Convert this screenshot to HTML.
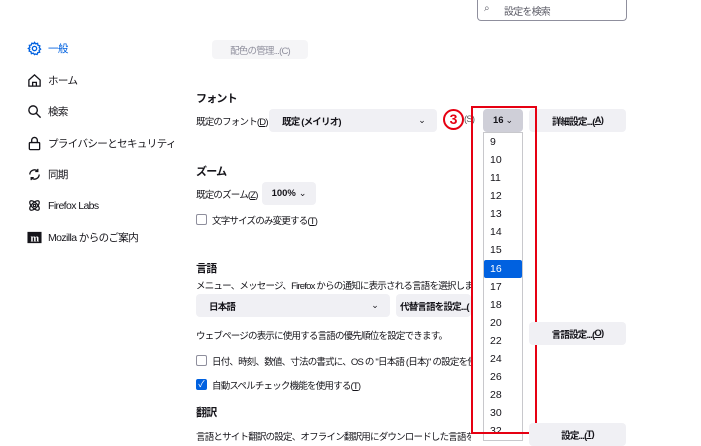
<!DOCTYPE html>
<html><head><meta charset="utf-8"><style>
*{margin:0;padding:0;box-sizing:border-box}
body{width:701px;height:441px;overflow:hidden;background:#fff;font-family:"Liberation Sans","Noto Sans CJK JP",sans-serif;font-size:9.5px;letter-spacing:-0.8px;color:#15141a;position:relative}
.a{position:absolute;white-space:nowrap}
.btn{position:absolute;background:#f0f0f4;border-radius:4px;display:flex;align-items:center;justify-content:center;font-size:9.5px;white-space:nowrap;overflow:hidden}
.h{font-weight:bold;font-size:11px}
.nav{position:absolute;left:27px;display:flex;align-items:center;font-size:10.5px;letter-spacing:-0.6px}
.nav svg{width:15px;height:15px;margin-right:6px}
.cb{position:absolute;width:11px;height:11px;border:1px solid #8f8f9d;border-radius:2px}
.it{position:absolute;left:490px;font-size:10.5px;letter-spacing:0}
</style></head><body>
<div class="a" style="left:477px;top:0;width:150px;height:21px;border:1px solid #8f8f9d;border-top:none;border-radius:0 0 4px 4px;color:#5b5b66;padding:3px 0 0 26px;font-size:10px">設定を検索</div>
<div class="a" style="left:484px;top:3px;font-size:10px;color:#5b5b66">⌕</div>

<div class="nav" style="top:41px;color:#0061e0"><svg viewBox="0 0 16 16" fill="none" stroke="#0061e0" stroke-width="1.4"><circle cx="8" cy="8" r="2.3"/><path d="M8 1.5l1.3 1.6 2-.6.4 2 2 .7-.6 2 1.4 1.5-1.6 1.3.6 2-2 .4-.7 2-2-.6L8 14.5l-1.3-1.6-2 .6-.4-2-2-.7.6-2L1.5 8l1.6-1.3-.6-2 2-.4.7-2 2 .6z"/></svg>一般</div>
<div class="nav" style="top:73px"><svg viewBox="0 0 16 16" fill="none" stroke="#15141a" stroke-width="1.4"><path d="M2 7.5L8 2l6 5.5V14H2z"/><path d="M6 14V10h4v4"/></svg>ホーム</div>
<div class="nav" style="top:104px"><svg viewBox="0 0 16 16" fill="none" stroke="#15141a" stroke-width="1.5"><circle cx="6.5" cy="6.5" r="4.5"/><path d="M10 10l4.5 4.5"/></svg>検索</div>
<div class="nav" style="top:136px"><svg viewBox="0 0 16 16" fill="none" stroke="#15141a" stroke-width="1.4"><rect x="2.5" y="7" width="11" height="7.5" rx="1"/><path d="M5 7V4.5a3 3 0 016 0V7"/></svg>プライバシーとセキュリティ</div>
<div class="nav" style="top:167px"><svg viewBox="0 0 16 16" fill="none" stroke="#15141a" stroke-width="1.4"><path d="M3 8a5 5 0 018.5-3.5M13 8a5 5 0 01-8.5 3.5"/><path d="M11.5 2v2.7H8.8M4.5 14v-2.7h2.7"/></svg>同期</div>
<div class="nav" style="top:198px"><svg viewBox="0 0 16 16" fill="none" stroke="#15141a" stroke-width="1.3"><ellipse cx="8" cy="8" rx="6.5" ry="3" transform="rotate(45 8 8)"/><ellipse cx="8" cy="8" rx="6.5" ry="3" transform="rotate(-45 8 8)"/><circle cx="8" cy="8" r="1.3"/></svg>Firefox Labs</div>
<div class="nav" style="top:230px"><svg viewBox="0 0 16 16"><rect x="0.5" y="2" width="15" height="12" fill="#15141a"/><text x="8" y="12" font-size="11" font-weight="bold" fill="#fff" text-anchor="middle" font-family="Liberation Serif">m</text></svg>Mozilla からのご案内</div>

<div class="btn" style="left:212px;top:40px;width:96px;height:19px;background:#f5f5f7;color:#8f8f9d">配色の管理...(C)</div>

<div class="a h" style="left:196px;top:90px">フォント</div>
<div class="a" style="left:196px;top:114px">既定のフォント(<u>D</u>)</div>
<div class="btn" style="left:269px;top:109px;width:168px;height:23px;justify-content:flex-start;padding-left:13px;font-weight:bold">既定 (メイリオ)<span style="position:absolute;right:12px;font-weight:normal;font-size:9px">⌄</span></div>
<div class="a" style="left:464px;top:114px;color:#555">(S)</div>
<div class="a" style="left:443px;top:109px;width:21px;height:21px;border:2px solid #e60012;border-radius:50%;background:#fff;color:#e60012;font-weight:bold;font-size:14px;letter-spacing:0;text-align:center;line-height:17px">3</div>
<div class="btn" style="left:483px;top:109px;width:40px;height:23px;background:#cfcfd8;font-weight:bold;letter-spacing:0">16 <span style="font-size:9px;font-weight:normal;margin-left:2px">⌄</span></div>
<div class="btn" style="left:529px;top:109px;width:97px;height:23px;font-weight:bold">詳細設定...(<u>A</u>)</div>

<div class="a" style="left:483px;top:132px;width:40px;height:309px;border:1px solid #c8c8cc;background:#fff"></div>
<div class="a" style="left:484px;top:260px;width:38px;height:18px;background:#0061e0;border-radius:2px"></div>
<div class="it" style="top:136px">9</div>
<div class="it" style="top:154px">10</div>
<div class="it" style="top:172px">11</div>
<div class="it" style="top:190px">12</div>
<div class="it" style="top:208px">13</div>
<div class="it" style="top:226px">14</div>
<div class="it" style="top:244px">15</div>
<div class="it" style="top:263px;color:#fff">16</div>
<div class="it" style="top:281px">17</div>
<div class="it" style="top:299px">18</div>
<div class="it" style="top:317px">20</div>
<div class="it" style="top:335px">22</div>
<div class="it" style="top:353px">24</div>
<div class="it" style="top:371px">26</div>
<div class="it" style="top:389px">28</div>
<div class="it" style="top:407px">30</div>
<div class="it" style="top:425px">32</div>
<div class="a" style="left:471px;top:106px;width:66px;height:328px;border:2.5px solid #e60012"></div>

<div class="a h" style="left:196px;top:163px">ズーム</div>
<div class="a" style="left:196px;top:187px">既定のズーム(<u>Z</u>)</div>
<div class="btn" style="left:262px;top:182px;width:54px;height:23px;font-weight:bold;letter-spacing:0">100% <span style="font-size:9px;font-weight:normal;margin-left:3px">⌄</span></div>
<div class="cb" style="left:196px;top:214px"></div>
<div class="a" style="left:212px;top:213px">文字サイズのみ変更する(<u>T</u>)</div>

<div class="a h" style="left:196px;top:260px">言語</div>
<div class="a" style="left:196px;top:278px;width:275px;overflow:hidden">メニュー、メッセージ、Firefox からの通知に表示される言語を選択します。</div>
<div class="btn" style="left:196px;top:294px;width:194px;height:23px;justify-content:flex-start;padding-left:13px;font-weight:bold">日本語<span style="position:absolute;right:12px;font-weight:normal;font-size:9px">⌄</span></div>
<div class="btn" style="left:396px;top:294px;width:75px;height:23px;justify-content:flex-start;padding-left:4px;font-weight:bold">代替言語を設定...(</div>
<div class="a" style="left:196px;top:328px">ウェブページの表示に使用する言語の優先順位を設定できます。</div>
<div class="btn" style="left:529px;top:322px;width:97px;height:23px;font-weight:bold">言語設定...(<u>O</u>)</div>
<div class="cb" style="left:196px;top:355px"></div>
<div class="a" style="left:212px;top:354px;width:259px;overflow:hidden">日付、時刻、数値、寸法の書式に、OS の "日本語 (日本)" の設定を使</div>
<div class="cb" style="left:196px;top:379px;background:#0061e0;border-color:#0061e0;color:#fff;font-size:9px;line-height:9px;text-align:center;letter-spacing:0">✓</div>
<div class="a" style="left:212px;top:378px">自動スペルチェック機能を使用する(<u>T</u>)</div>
<div class="a h" style="left:196px;top:404px">翻訳</div>
<div class="a" style="left:196px;top:429px;width:275px;overflow:hidden">言語とサイト翻訳の設定、オフライン翻訳用にダウンロードした言語を管理します。</div>
<div class="btn" style="left:529px;top:423px;width:97px;height:23px;font-weight:bold">設定...(<u>T</u>)</div>
</body></html>
